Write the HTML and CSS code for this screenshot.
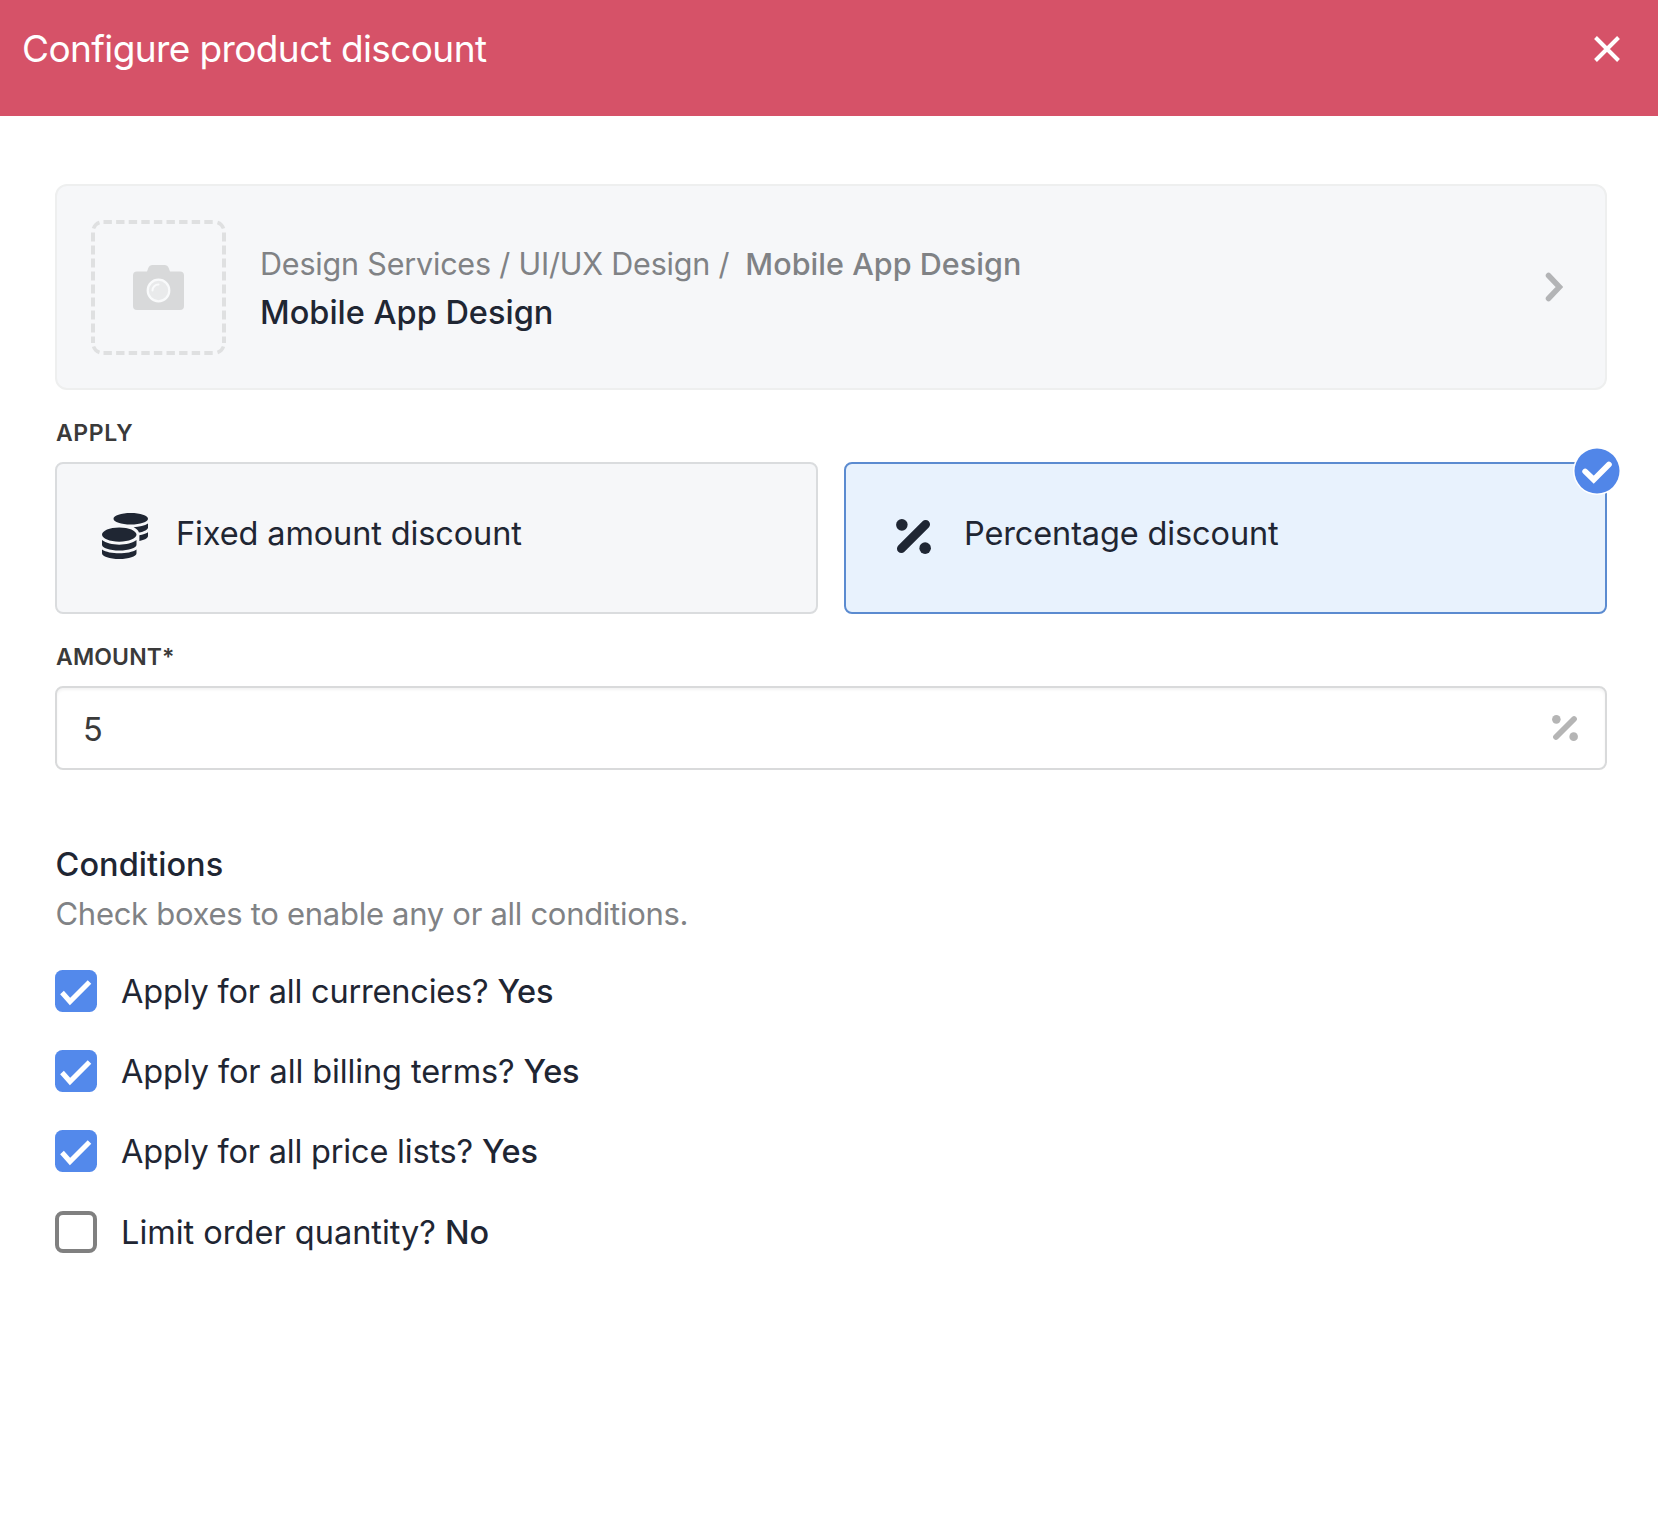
FILE: index.html
```
<!DOCTYPE html>
<html lang="en">
<head>
<meta charset="utf-8">
<title>Configure product discount</title>
<link rel="stylesheet" href="styles.css">
</head>
<body>
<header class="header">
  <h1 class="header-title">Configure product discount</h1>
  <svg class="close" viewBox="0 0 28 28"><path d="M2.500 2.500 25.500 25.500M25.500 2.500 2.500 25.500"/></svg>
</header>
<main class="content">
  <section class="product">
    <div class="thumb">
      <svg class="thumb-frame" viewBox="0 0 135 135"><path d="M12 2H123M12 133H123" stroke-dasharray="8.400 4.200" stroke-dashoffset="-0.500"/><path d="M2 12V123M133 12V123" stroke-dasharray="9 4" stroke-dashoffset="-0.500"/><path stroke-width="3.500" d="M2.500 8.500Q4 4 8.500 2.500M126.500 2.500Q131 4 132.500 8.500M132.500 126.500Q131 131 126.500 132.500M8.500 132.500Q4 131 2.500 126.500"/></svg>
      <svg class="camera" viewBox="0 0 51 45"><path fill="#d8d9da" d="M4 6.500H14L15.500 2.500Q16.500 0 19 0H32Q34.500 0 35.500 2.500L37 6.500H47Q51 6.500 51 10.500V41Q51 45 47 45H4Q0 45 0 41V10.500Q0 6.500 4 6.500Z"/><circle cx="25.500" cy="25.500" r="10.800" fill="#e9eaeb" stroke="#f9fafb" stroke-width="2.200"/><path d="M19.500 25.500a6 6 0 0 1 6-6" fill="none" stroke="#f9fafb" stroke-width="2" stroke-linecap="round"/></svg>
    </div>
    <div class="product-text">
      <div class="crumbs"><span>Design Services / UI/UX Design /</span><b>Mobile App Design</b></div>
      <div class="product-name">Mobile App Design</div>
    </div>
    <svg class="chevron" viewBox="0 0 18 30"><path d="M3.500 3.500 14.500 15 3.500 26.500"/></svg>
  </section>

  <div class="label label-apply">APPLY</div>
  <div class="options">
    <div class="option">
      <svg class="coins" viewBox="0 0 512 512"><path d="M0 405.300V448c0 35.300 86 64 192 64s192-28.700 192-64v-42.700C342.700 434.400 267.200 448 192 448S41.300 434.400 0 405.300zM320 128c106 0 192-28.700 192-64S426 0 320 0 128 28.700 128 64s86 64 192 64zM0 300.400V352c0 35.300 86 64 192 64s192-28.700 192-64v-51.600c-41.300 34-116.900 51.600-192 51.600S41.300 334.400 0 300.400zm416 11c57.300-11.100 96-31.700 96-55.400v-42.700c-23.200 16.400-57.300 27.600-96 34.500v63.600zM192 160C86 160 0 195.800 0 240s86 80 192 80 192-35.800 192-80-86-80-192-80zm219.300 56.300c60-10.800 100.700-32 100.700-56.300v-42.700c-35.500 25.100-96.500 38.600-160.700 41.800 29.500 14.300 51.200 33.500 60 57.200z"/></svg>
      <span>Fixed amount discount</span>
    </div>
    <div class="option option-selected">
      <svg class="percent" viewBox="0 0 34 34"><circle cx="5.700" cy="5.700" r="5.600"/><circle cx="28.300" cy="28.300" r="5.600"/><path d="M5.200 28.800 28.800 5.200"/></svg>
      <span>Percentage discount</span>
      <svg class="badge" viewBox="0 0 48 48"><circle cx="24" cy="24" r="24" fill="#fff"/><circle cx="24" cy="24" r="22.500" fill="#5186e8"/><path d="M12.200 24.500 20.700 32.700 35.900 17.500" fill="none" stroke="#fff" stroke-width="5.800" stroke-linecap="round"/></svg>
    </div>
  </div>

  <div class="label label-amount">AMOUNT*</div>
  <div class="input">
    <span>5</span>
    <svg class="percent percent-small" viewBox="0 0 34 34"><circle cx="5.700" cy="5.700" r="5.600"/><circle cx="28.300" cy="28.300" r="5.600"/><path d="M5.200 28.800 28.800 5.200"/></svg>
  </div>

  <h2 class="conditions">Conditions</h2>
  <p class="hint">Check boxes to enable any or all conditions.</p>
  <ul class="checks">
    <li class="check"><svg class="box" viewBox="0 0 42 42"><rect width="42" height="42" rx="7.500"/><path d="M7 22.500 15 31.500 34.500 12"/></svg><span class="tight">Apply for all currencies?</span><b>Yes</b></li>
    <li class="check"><svg class="box" viewBox="0 0 42 42"><rect width="42" height="42" rx="7.500"/><path d="M7 22.500 15 31.500 34.500 12"/></svg><span class="snug">Apply for all billing terms?</span><b>Yes</b></li>
    <li class="check"><svg class="box" viewBox="0 0 42 42"><rect width="42" height="42" rx="7.500"/><path d="M7 22.500 15 31.500 34.500 12"/></svg><span class="tight">Apply for all price lists?</span><b>Yes</b></li>
    <li class="check"><span class="box box-empty"></span><span>Limit order quantity?</span><b>No</b></li>
  </ul>
</main>
</body>
</html>
```
FILE: styles.css
```
* { box-sizing: border-box; margin: 0; padding: 0; }
body { background: #fff; color: #1f2633; font-family: Inter, sans-serif; font-size: 32.5px; }
svg { display: block; flex: none; }
b { font-weight: 500; }

.header { display: flex; align-items: center; justify-content: space-between; height: 116px; padding: 0 37px 19px 22px; background: #d65268; color: #fff; }
.header-title { font-size: 37px; font-weight: 400; line-height: 48px; letter-spacing: -0.61px; }
.close { width: 28px; height: 28px; fill: none; stroke: #fff; stroke-width: 4; }

.content { padding: 68px 51px 0 55px; }

.product { display: flex; align-items: center; height: 206px; padding: 0 42px 0 34px; border: 2px solid #eeefef; border-radius: 12px; background: #f6f7f9; }
.thumb { display: grid; place-items: center; width: 135px; height: 135px; }
.thumb-frame, .camera { grid-area: 1 / 1; }
.thumb-frame { width: 135px; height: 135px; fill: none; stroke: #dfe0e1; stroke-width: 4; }
.camera { width: 51px; height: 45px; }
.product-text { flex: 1; margin-left: 34px; padding-top: 1px; line-height: 49px; }
.crumbs { display: flex; gap: 16px; color: #808285; font-size: 30.5px; letter-spacing: -0.19px; }
.crumbs b { font-weight: 550; letter-spacing: 0.04px; }
.product-name { font-weight: 500; }
.chevron { width: 18px; height: 30px; fill: none; stroke: #b3b4b6; stroke-width: 5.500; stroke-linecap: round; }

.label { padding-left: 1px; color: #3a3a3a; font-size: 23px; font-weight: 600; line-height: 30px; }
.label-apply { margin: 28px 0 14px; letter-spacing: 0.6px; }
.label-amount { margin: 28px 0 14px; letter-spacing: 0.15px; }

.options { display: grid; grid-template-columns: 1fr 1fr; gap: 26px; letter-spacing: -0.13px; }
.option { position: relative; display: flex; align-items: center; height: 152px; padding: 0 45px 10px; border: 2px solid #dadcde; border-radius: 8px; background: #f6f7f9; }
.option-selected { padding-left: 50px; border-color: #5b8bd0; background: #e8f2fd; }
.coins { width: 46px; height: 46px; margin: 6px 28px 0 0; fill: #1f2633; }
.percent { width: 35px; height: 35px; margin: 6px 33px 0 0; fill: #1f2633; stroke: #1f2633; }
.percent circle { stroke: none; }
.percent path { stroke-width: 8.500; stroke-linecap: round; }
.badge { position: absolute; top: -17px; right: -16px; width: 48px; height: 48px; }

.input { display: flex; align-items: center; justify-content: space-between; height: 84px; padding: 0 27px 0 26px; border: 2px solid #d9dadb; border-radius: 8px; box-shadow: inset 0 2px 3px #0000000d; color: #3a3a3a; }
.input span { padding-top: 2px; }
.percent-small { width: 26px; height: 26px; margin: 0; fill: #b5b5b5; stroke: #b5b5b5; }
.percent-small path { stroke-width: 7.500; }

.conditions { margin-top: 70px; padding-left: 0.5px; font-size: 32.5px; font-weight: 500; line-height: 49px; letter-spacing: 0.05px; }
.hint { padding-left: 0.5px; color: #808285; font-size: 31px; line-height: 49px; letter-spacing: -0.29px; }
.checks { display: grid; row-gap: 38.200px; margin-top: 32px; list-style: none; }
.check { display: flex; align-items: center; height: 42px; line-height: 40px; }
.check span:not(.box), .check b { padding-top: 2px; }
.box { flex: none; width: 42px; height: 42px; margin-right: 24px; fill: #5389eb; }
.box path { fill: none; stroke: #fff; stroke-width: 5; }
.box-empty { border: 4px solid #808080; border-radius: 8px; }
.check b { margin-left: 9px; letter-spacing: -0.200px; }
.tight { letter-spacing: -0.190px; }
.snug { letter-spacing: -0.110px; }
```
